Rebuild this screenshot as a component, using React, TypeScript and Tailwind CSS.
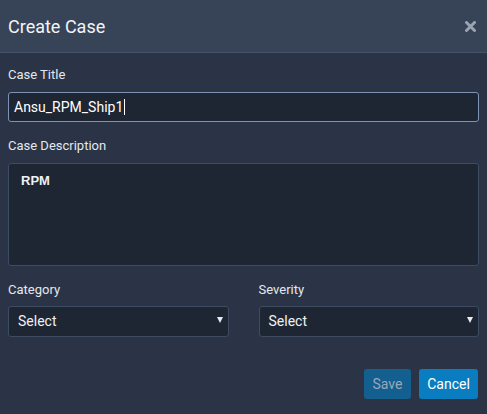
const labelCls = "block text-[13px] leading-5 text-[#e4e8ee]";

const SelectBox = ({ label }: { label: string }) => (
  <div className="flex-1">
    <label className={labelCls}>{label}</label>
    <div className="mt-[6px] flex h-[31px] items-center justify-between rounded-[3px] border border-[#3d4b63] bg-[#1e2633] pl-[9px] pr-[5px]">
      <span className="text-[14px] text-[#eef1f5]">Select</span>
      <svg width="6" height="6" viewBox="0 0 6 6" className="mb-[3px]">
        <path d="M0 0 H6 L3 6 Z" fill="#e8ecf1" />
      </svg>
    </div>
  </div>
);

const App = () => {
  return (
    <div
      className="h-[414px] w-[487px] overflow-hidden bg-[#2a3446]"
      style={{ fontFamily: "Roboto, 'Liberation Sans', sans-serif" }}
    >
      <div className="flex h-[53px] items-center justify-between border-b border-[#45526a] bg-[#374357] pl-2 pr-[11px]">
        <h3 className="text-[18px] text-[#f2f4f7]">Create Case</h3>
        <svg width="11" height="11" viewBox="0 0 11 11">
          <path d="M1.5 1.5 L9.5 9.5 M9.5 1.5 L1.5 9.5" stroke="#9aa3b0" strokeWidth="3" strokeLinecap="round" />
        </svg>
      </div>

      <div className="px-2">
        <label className={`${labelCls} mt-[12px]`}>Case Title</label>
        <div className="mt-[7px] flex h-[30px] items-center rounded-[3px] border border-[#7d92b4] bg-[#1e2633] pl-[5px]">
          <span className="text-[14px] text-white">Ansu_RPM_Ship1</span>
          <span className="ml-[1px] h-[16px] w-px bg-white" />
        </div>

        <label className={`${labelCls} mt-[14px]`}>Case Description</label>
        <div className="mt-[7px] h-[103px] rounded-[3px] border border-[#3d4b63] bg-[#1e2633] px-3 pt-[9px]">
          <p
            className="text-[13px] font-bold leading-[15px] text-[#eef1f5]"
            style={{ fontFamily: "'Liberation Sans', Arial, sans-serif" }}
          >
            RPM
          </p>
        </div>

        <div className="mt-[14px] flex gap-[30px]">
          <SelectBox label="Category" />
          <SelectBox label="Severity" />
        </div>

        <div className="mt-[32px] flex justify-end gap-2 pr-[1px]">
          <button className="h-[30px] w-[47px] rounded-[3px] bg-[#135f8f] text-[14px] text-[#98a8b8]">
            Save
          </button>
          <button className="h-[30px] w-[59px] rounded-[3px] bg-[#0a7dc0] text-[14px] text-white">
            Cancel
          </button>
        </div>
      </div>
    </div>
  );
};

export default App;
